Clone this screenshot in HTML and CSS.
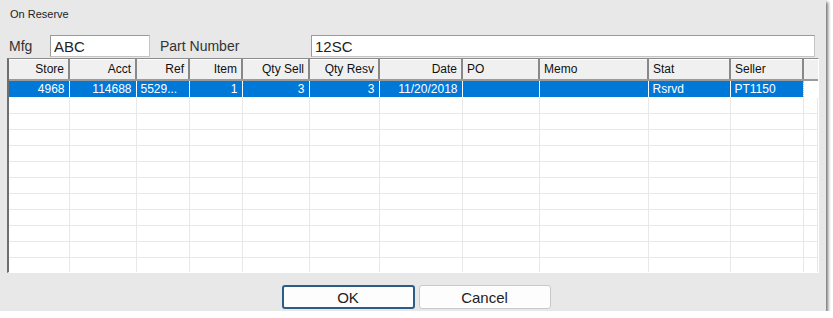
FILE: index.html
```html
<!DOCTYPE html>
<html lang="en">
<head>
  <meta charset="UTF-8">
  <title>On Reserve</title>
  <link rel="stylesheet" href="styles.css">
</head>
<body>
  <div class="dialog">
    <div class="title">On Reserve</div>

    <div class="search-row">
      <label class="lbl lbl-mfg">Mfg</label>
      <input class="field field-mfg" type="text" value="ABC">
      <label class="lbl lbl-part">Part Number</label>
      <input class="field field-part" type="text" value="12SC">
    </div>

    <div class="grid">
      <table id="reserve-table">
        <colgroup>
          <col style="width:60px">
          <col style="width:67px">
          <col style="width:53px">
          <col style="width:53px">
          <col style="width:67px">
          <col style="width:70px">
          <col style="width:83px">
          <col style="width:77px">
          <col style="width:109px">
          <col style="width:82px">
          <col style="width:73px">
          <col>
        </colgroup>
        <thead>
          <tr>
            <th class="num">Store</th>
            <th class="num">Acct</th>
            <th class="num">Ref</th>
            <th class="num">Item</th>
            <th class="num">Qty Sell</th>
            <th class="num">Qty Resv</th>
            <th class="num">Date</th>
            <th>PO</th>
            <th>Memo</th>
            <th>Stat</th>
            <th>Seller</th>
            <th class="filler"></th>
          </tr>
        </thead>
        <tbody id="rows"></tbody>
      </table>
    </div>

    <div class="buttons">
      <button class="btn btn-default">OK</button>
      <button class="btn">Cancel</button>
    </div>
  </div>

  <script>
    const reserves = [
      { store: "4968", acct: "114688", ref: "5529...", item: "1", sell: "3", resv: "3", date: "11/20/2018", po: "", memo: "", stat: "Rsrvd", seller: "PT1150" }
    ];
    const rows = document.getElementById("rows");

    // selected rows first, then empty filler rows
    reserves.forEach((r) => {
      const tr = document.createElement("tr");
      tr.className = "selected";
      tr.innerHTML = `
        <td class="num">${r.store}</td>
        <td class="num">${r.acct}</td>
        <td>${r.ref}</td>
        <td class="num">${r.item}</td>
        <td class="num">${r.sell}</td>
        <td class="num">${r.resv}</td>
        <td class="num">${r.date}</td>
        <td>${r.po}</td>
        <td>${r.memo}</td>
        <td>${r.stat}</td>
        <td>${r.seller}</td>
        <td class="filler"></td>`;
      rows.appendChild(tr);
    });

    for (let i = 0; i < 12; i++) {
      const tr = document.createElement("tr");
      tr.innerHTML = "<td></td>".repeat(12);
      rows.appendChild(tr);
    }
  </script>
</body>
</html>
```

FILE: styles.css
```css
body {
  margin: 0;
  background: #fff;
  font-family: "Liberation Sans", Arial, sans-serif;
}

.dialog {
  width: 826px;
  height: 311px;
  box-sizing: border-box;
  background: #e8e8e8;
  box-shadow: 2px 2px 3px rgba(0, 0, 0, 0.55);
  padding: 8px 0 0 0;
  display: flex;
  flex-direction: column;
}

.title {
  font-size: 11px;
  color: #222;
  padding-left: 10px;
  height: 27px;
}

.search-row {
  display: flex;
  align-items: center;
  height: 22px;
  padding-left: 9px;
}

.lbl {
  font-size: 14px;
  color: #333;
}

.lbl-mfg {
  width: 41px;
}

.lbl-part {
  width: 151px;
  padding-left: 10px;
}

.field {
  height: 22px;
  box-sizing: border-box;
  border: 1px solid #c4c4c4;
  border-top-color: #9a9a9a;
  border-left-color: #9a9a9a;
  background: #fff;
  font-family: "Liberation Sans", Arial, sans-serif;
  font-size: 15px;
  color: #222;
  padding: 0 3px;
  outline: none;
}

.field-mfg {
  width: 100px;
}

.field-part {
  width: 504px;
}

.grid {
  margin: 1px 0 0 7px;
  width: 812px;
  height: 215px;
  box-sizing: border-box;
  border-left: 2px solid #6e6e6e;
  border-top: 1px solid #8c8c8c;
  border-right: 1px solid #fff;
  border-bottom: 1px solid #fff;
  background: #fff;
  overflow: hidden;
}

table {
  width: 100%;
  table-layout: fixed;
  border-collapse: collapse;
  font-size: 12px;
}

th {
  height: 20px;
  box-sizing: border-box;
  background: #f0f0f0;
  font-weight: normal;
  color: #111;
  text-align: left;
  padding: 0 4px;
  border-right: 2px solid #888;
  border-bottom: 2px solid #9a9a9a;
  border-top: 1px solid #fff;
  white-space: nowrap;
  overflow: hidden;
}

th.filler {
  border-right: none;
}

td {
  height: 15px;
  padding: 0 4px;
  border-right: 1px solid #e8e8e8;
  border-bottom: 1px solid #e8e8e8;
  white-space: nowrap;
  overflow: hidden;
  color: #111;
}

.num {
  text-align: right;
}

tr.selected td {
  height: 16px;
  background: #0078d7;
  color: #fff;
  border-right: 1px solid #fff;
  border-bottom: 1px solid #fff;
}

tr.selected td:nth-child(11) {
  border-right: 1px dotted #9cc4ea;
}

tr.selected td.filler {
  background: #fff;
  border-right: none;
}

.buttons {
  display: flex;
  justify-content: center;
  gap: 4px;
  margin-top: 12px;
  padding-left: 6px;
}

.btn {
  width: 132px;
  height: 24px;
  box-sizing: border-box;
  background: #fdfdfd;
  border: 1px solid #c9c9c9;
  border-radius: 3px;
  font-family: "Liberation Sans", Arial, sans-serif;
  font-size: 15px;
  color: #222;
  padding: 0;
}

.btn-default {
  border: 2px solid #2c5d86;
  width: 133px;
}
```
